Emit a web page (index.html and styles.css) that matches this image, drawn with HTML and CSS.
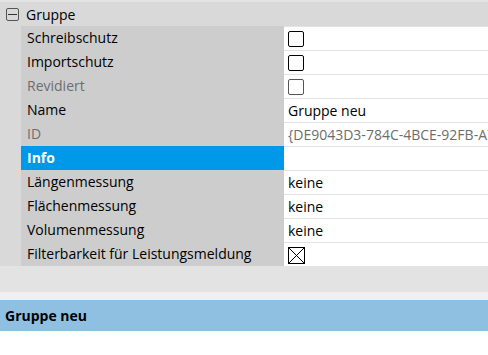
FILE: index.html
```html
<!DOCTYPE html>
<html lang="de">
<head>
    <meta charset="UTF-8">
    <title>Eigenschaften - Gruppe</title>
    <link rel="stylesheet" href="styles.css">
</head>
<body>
    <div class="props">
        <div class="group-head">
            <span class="toggle"></span>
            <span>Gruppe</span>
        </div>
        <div class="rows">
            <div class="row"><div class="label">Schreibschutz</div><div class="value"><span class="check"></span></div></div>
            <div class="row"><div class="label">Importschutz</div><div class="value"><span class="check"></span></div></div>
            <div class="row"><div class="label muted">Revidiert</div><div class="value"><span class="check muted-check"></span></div></div>
            <div class="row"><div class="label">Name</div><div class="value">Gruppe neu</div></div>
            <div class="row"><div class="label muted">ID</div><div class="value muted">{DE9043D3-784C-4BCE-92FB-A7C1E05B3D21}</div></div>
            <div class="row selected"><div class="label">Info</div><div class="value"></div></div>
            <div class="row"><div class="label">Längenmessung</div><div class="value">keine</div></div>
            <div class="row"><div class="label">Flächenmessung</div><div class="value">keine</div></div>
            <div class="row"><div class="label">Volumenmessung</div><div class="value">keine</div></div>
            <div class="row"><div class="label">Filterbarkeit für Leistungsmeldung</div><div class="value"><span class="check checked"></span></div></div>
        </div>
        <div class="filler"></div>
    </div>
    <div class="splitter"></div>
    <div class="desc">
        <div class="desc-title">Gruppe neu</div>
    </div>
</body>
</html>
```
FILE: styles.css
```css
body {
    margin: 0;
    font-family: "Open Sans", "Noto Sans", sans-serif;
    font-size: 14px;
    color: #000;
    background: #fff;
    overflow: hidden;
}
.props {
    background: #e3e3e3;
    padding-top: 2px;
}
.group-head {
    height: 24px;
    display: flex;
    align-items: center;
    gap: 7px;
    padding-left: 6px;
    background: #d9d9d9;
}
.toggle {
    width: 11px;
    height: 11px;
    border: 1px solid #555;
    border-radius: 2px;
    position: relative;
}
.toggle::after {
    content: "";
    position: absolute;
    left: 1px;
    right: 1px;
    top: 5px;
    height: 1px;
    background: #333;
}
.rows {
    background: #d9d9d9;
    padding-left: 21px;
}
.row {
    display: grid;
    grid-template-columns: 263px 1fr;
    height: 24px;
}
.label {
    background: #cdcdcd;
    padding-left: 6px;
    line-height: 24px;
    white-space: nowrap;
}
.value {
    background: #fff;
    border-top: 1px solid #e3e3e3;
    padding-left: 4px;
    line-height: 23px;
    white-space: nowrap;
    overflow: hidden;
    display: flex;
    align-items: center;
}
.muted {
    color: #6d6d6d;
}
.selected .label {
    background: #0098e8;
    color: #fff;
    font-weight: bold;
}
.check {
    width: 14px;
    height: 14px;
    border: 1.5px solid #000;
    border-radius: 2px;
    margin-top: 1px;
}
.muted-check {
    border-color: #555;
}
.checked {
    width: 15px;
    height: 15px;
    border-width: 1px;
    border-radius: 0;
    background:
        linear-gradient(45deg, transparent 47%, #000 47%, #000 53%, transparent 53%),
        linear-gradient(-45deg, transparent 47%, #000 47%, #000 53%, transparent 53%);
}
.filler {
    height: 26px;
}
.splitter {
    height: 8px;
    background: #f0f0f0;
}
.desc-title {
    background: #8fc0e2;
    height: 31px;
    line-height: 31px;
    padding-left: 5px;
    font-weight: bold;
}
```
